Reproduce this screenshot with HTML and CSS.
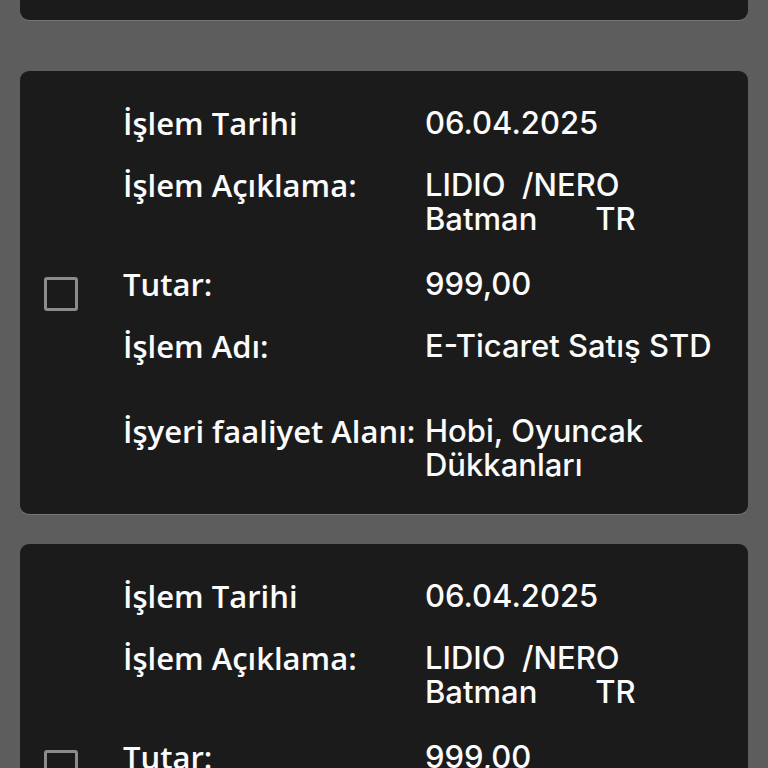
FILE: index.html
```html
<!DOCTYPE html>
<html lang="tr">
<head>
<meta charset="utf-8">
<link rel="stylesheet" href="styles.css">
</head>
<body>
<div class="list">
  <div class="card card--partial"></div>

  <div class="card">
    <div class="check"></div>
    <div class="fields">
      <div class="label">İşlem Tarihi</div><div class="value">06.04.2025</div>
      <div class="label">İşlem Açıklama:</div><div class="value">LIDIO &nbsp;/NERO<br>Batman &nbsp; &nbsp; &nbsp; TR</div>
      <div class="label gap-sm">Tutar:</div><div class="value gap-sm">999,00</div>
      <div class="label">İşlem Adı:</div><div class="value">E-Ticaret Satış STD</div>
      <div class="label gap-lg">İşyeri faaliyet Alanı:</div><div class="value gap-lg">Hobi, Oyuncak Dükkanları</div>
    </div>
  </div>

  <div class="card">
    <div class="check"></div>
    <div class="fields">
      <div class="label">İşlem Tarihi</div><div class="value">06.04.2025</div>
      <div class="label">İşlem Açıklama:</div><div class="value">LIDIO &nbsp;/NERO<br>Batman &nbsp; &nbsp; &nbsp; TR</div>
      <div class="label gap-sm">Tutar:</div><div class="value gap-sm">999,00</div>
      <div class="label">İşlem Adı:</div><div class="value">E-Ticaret Satış STD</div>
      <div class="label gap-lg">İşyeri faaliyet Alanı:</div><div class="value gap-lg">Hobi, Oyuncak Dükkanları</div>
    </div>
  </div>
</div>
</body>
</html>
```
FILE: styles.css
```css
html, body {
  margin: 0;
  padding: 0;
  background: #5d5d5d;
  height: 768px;
  overflow: hidden;
}
.list {
  display: flex;
  flex-direction: column;
  gap: 30px;
  padding: 0 20px;
}
.card {
  background: #1b1b1b;
  border-radius: 9px;
  box-shadow: 0 1px 0 #767676;
  display: flex;
  align-items: center;
  padding: 35px 0 32px 24px;
  color: #fbfbfb;
}
.card--partial {
  height: 20px;
  padding: 0;
  border-top-left-radius: 0;
  border-top-right-radius: 0;
  margin-bottom: 21px;
}
.check {
  width: 28px;
  height: 28px;
  border: 3px solid #8c8c8c;
  border-radius: 3px;
  flex: none;
  margin-right: 45px;
}
.fields {
  display: grid;
  grid-template-columns: 302px 1fr;
  row-gap: 28px;
  padding-right: 20px;
}
.label {
  font-family: "Open Sans", sans-serif;
  font-weight: 600;
  font-size: 31px;
  line-height: 34px;
}
.value {
  font-family: Inter, sans-serif;
  font-weight: 500;
  font-size: 31px;
  line-height: 34px;
}
.gap-sm { margin-top: 3px; }
.gap-lg { margin-top: 23px; }
```
